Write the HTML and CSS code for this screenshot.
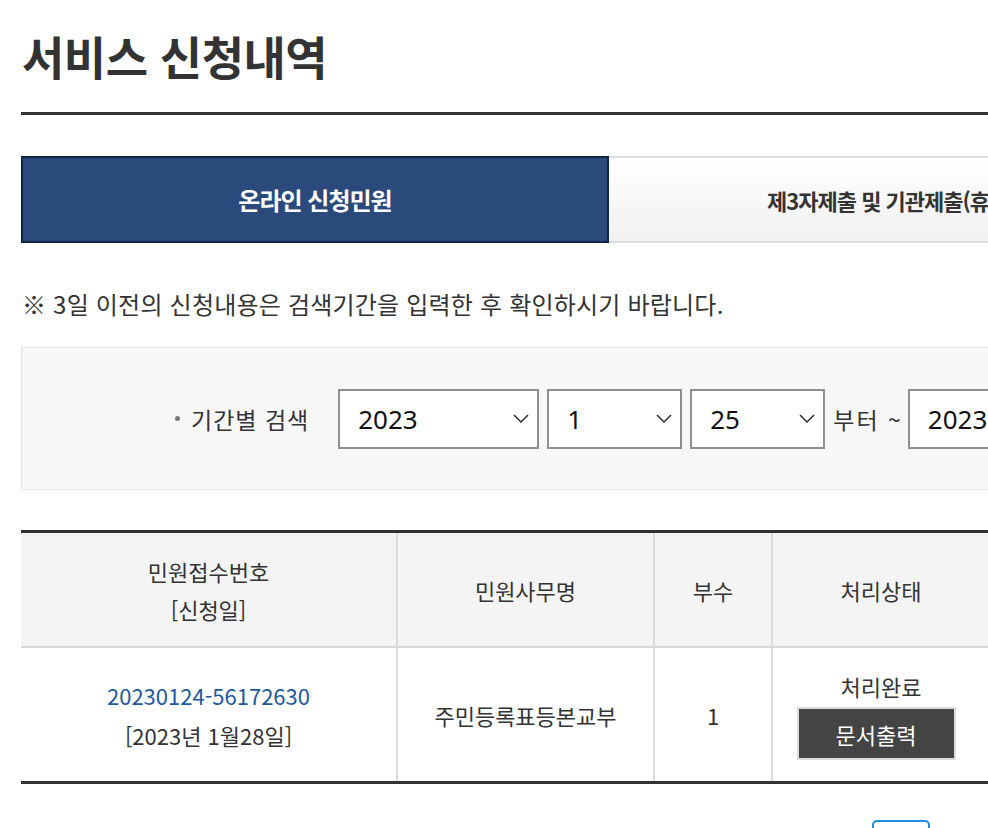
FILE: index.html
```html
<!DOCTYPE html>
<html lang="ko">
<head>
<meta charset="utf-8">
<title>서비스 신청내역</title>
<link rel="stylesheet" href="styles.css">
</head>
<body>
<div class="page">
  <h1 class="title">서비스 신청내역</h1>

  <div class="tabs">
    <div class="tab tab-active">온라인 신청민원</div>
    <div class="tab">제3자제출 및 기관제출(휴대폰)</div>
  </div>

  <p class="notice">※ 3일 이전의 신청내용은 검색기간을 입력한 후 확인하시기 바랍니다.</p>

  <div class="search">
    <span class="search-label"><span class="dot"></span>기간별 검색</span>
    <div class="select sel-year"><span>2023</span><svg class="chev" width="16" height="9" viewBox="0 0 16 9"><path d="M1 1l7 7 7-7" fill="none" stroke="#333" stroke-width="1.5"/></svg></div>
    <div class="select sel-small"><span>1</span><svg class="chev" width="16" height="9" viewBox="0 0 16 9"><path d="M1 1l7 7 7-7" fill="none" stroke="#333" stroke-width="1.5"/></svg></div>
    <div class="select sel-small"><span>25</span><svg class="chev" width="16" height="9" viewBox="0 0 16 9"><path d="M1 1l7 7 7-7" fill="none" stroke="#333" stroke-width="1.5"/></svg></div>
    <span class="search-text">부터 ~</span>
    <div class="select sel-year"><span>2023</span><svg class="chev" width="16" height="9" viewBox="0 0 16 9"><path d="M1 1l7 7 7-7" fill="none" stroke="#333" stroke-width="1.5"/></svg></div>
    <div class="select sel-small"><span>1</span><svg class="chev" width="16" height="9" viewBox="0 0 16 9"><path d="M1 1l7 7 7-7" fill="none" stroke="#333" stroke-width="1.5"/></svg></div>
  </div>

  <table class="list">
    <colgroup>
      <col class="c1"><col class="c2"><col class="c3"><col class="c4"><col class="c5">
    </colgroup>
    <thead>
      <tr>
        <th>민원접수번호<br>[신청일]</th>
        <th>민원사무명</th>
        <th>부수</th>
        <th>처리상태</th>
        <th>비고</th>
      </tr>
    </thead>
    <tbody>
      <tr>
        <td class="num"><a href="#">20230124-56172630</a><br>[2023년 1월28일]</td>
        <td>주민등록표등본교부</td>
        <td>1</td>
        <td class="state">처리완료<br><button class="print-btn" type="button">문서출력</button></td>
        <td></td>
      </tr>
    </tbody>
  </table>

  <div class="paging">
    <span class="page-cur">1</span>
  </div>
</div>
</body>
</html>
```

FILE: styles.css
```css
html, body {
  margin: 0;
  padding: 0;
  overflow: hidden;
  background: #fff;
}
body {
  font-family: "Noto Sans CJK KR", "Noto Sans", sans-serif;
  color: #333;
}
.page {
  width: 1172px;
  margin-left: 21px;
}
.title {
  margin: 0;
  padding: 25px 0 27px 1px;
  height: 60px;
  line-height: 60px;
  font-size: 46px;
  font-weight: 700;
  letter-spacing: -0.5px;
  color: #333;
  border-bottom: 3px solid #333;
}
.tabs {
  display: flex;
  margin-top: 41px;
  height: 87px;
}
.tab {
  flex: 1;
  display: flex;
  align-items: center;
  justify-content: center;
  white-space: nowrap;
  font-size: 22px;
  font-weight: 700;
  letter-spacing: -1px;
  color: #333;
  border-top: 2px solid #ddd;
  border-bottom: 2px solid #ddd;
  background: linear-gradient(#ffffff, #f0f0f0);
}
.tab-active {
  font-size: 24px;
  color: #fff;
  background: #2b4a7c;
  border: 2px solid #0e2543;
}
.notice {
  margin: 43px 0 0 1px;
  font-size: 24px;
  line-height: 36px;
  letter-spacing: 0.2px;
  color: #333;
  white-space: nowrap;
}
.search {
  margin-top: 25px;
  height: 141px;
  border: 1px solid #e6e6e6;
  background: #f7f7f7;
  display: flex;
  align-items: center;
  padding-left: 153px;
  overflow: hidden;
  white-space: nowrap;
}
.search > * { flex-shrink: 0; }
.search-label {
  display: flex;
  align-items: center;
  font-size: 23px;
  letter-spacing: 1px;
  color: #333;
  margin-right: 29px;
}
.dot {
  width: 5px;
  height: 5px;
  border-radius: 50%;
  background: #777;
  margin-right: 11px;
}
.select {
  height: 56px;
  border: 2px solid #8f8f8f;
  background: #fff;
  display: flex;
  align-items: center;
  justify-content: space-between;
  padding: 0 8px 0 18px;
  font-family: "Noto Sans", sans-serif;
  font-size: 26px;
  color: #111;
  margin-right: 8px;
  box-sizing: content-box;
}
.sel-year { width: 171px; }
.sel-small { width: 105px; }
.chev { display: block; }
.search-text {
  font-size: 23px;
  letter-spacing: 2px;
  color: #333;
  margin-right: 5px;
}
.list {
  margin-top: 40px;
  width: 1172px;
  border-collapse: collapse;
  table-layout: fixed;
  border-top: 3px solid #333;
  border-bottom: 3px solid #333;
}
.c1 { width: 376px; }
.c2 { width: 257px; }
.c3 { width: 118px; }
.c4 { width: 218px; }
.list th, .list td {
  border-left: 2px solid #dcdcdc;
  text-align: center;
  font-size: 22px;
  font-weight: 400;
  letter-spacing: 0;
  color: #333;
  padding: 0;
}
.list th:first-child, .list td:first-child { border-left: 0; }
.list th {
  background: #f4f4f4;
  height: 113px;
  line-height: 38px;
  border-bottom: 2px solid #d8d8d8;
}
.list td {
  height: 133px;
  line-height: 40px;
}
.list td.num a {
  color: #1e5aa0;
  text-decoration: none;
}
.list td.state { line-height: 34px; }
.print-btn {
  margin: 4px 10px 0 0;
  width: 159px;
  height: 53px;
  background: #444;
  border: 2px solid #dcdcdc;
  color: #fff;
  font-family: "Noto Sans CJK KR", sans-serif;
  font-size: 22px;
  cursor: pointer;
}
.paging {
  margin-top: 36px;
  display: flex;
  justify-content: flex-start;
  padding-left: 851px;
}
.page-cur {
  width: 54px;
  height: 54px;
  border: 2px solid #1a8fe0;
  border-radius: 5px;
  display: flex;
  align-items: center;
  justify-content: center;
  color: #1a8fe0;
  font-size: 22px;
}
```
